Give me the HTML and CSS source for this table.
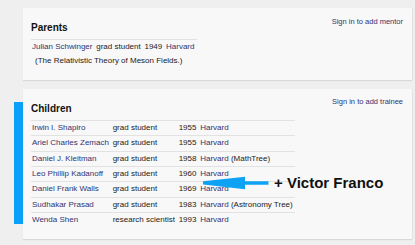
FILE: index.html
```html
<!DOCTYPE html>
<html>
<head>
<meta charset="utf-8">
<link rel="stylesheet" href="styles.css">
</head>
<body>
<div class="page">
  <section class="card">
    <div class="card-head">
      <h2 class="title">Parents</h2>
      <a class="signin">Sign in to add mentor</a>
    </div>
    <table class="people parents">
      <tr><td><a>Julian Schwinger</a></td><td>grad student</td><td>1949</td><td><a>Harvard</a></td></tr>
      <tr><td colspan="4" class="thesis">(The Relativistic Theory of Meson Fields.)</td></tr>
    </table>
  </section>
  <section class="card">
    <div class="card-head">
      <h2 class="title">Children</h2>
      <a class="signin">Sign in to add trainee</a>
    </div>
    <table class="people children">
      <tr><td><a>Irwin I. Shapiro</a></td><td>grad student</td><td>1955</td><td><a>Harvard</a></td></tr>
      <tr><td><a>Ariel Charles Zemach</a></td><td>grad student</td><td>1955</td><td><a>Harvard</a></td></tr>
      <tr><td><a>Daniel J. Kleitman</a></td><td>grad student</td><td>1958</td><td><a>Harvard</a> (MathTree)</td></tr>
      <tr><td><a>Leo Phillip Kadanoff</a></td><td>grad student</td><td>1960</td><td><a>Harvard</a></td></tr>
      <tr><td><a>Daniel Frank Walls</a></td><td>grad student</td><td>1969</td><td><a>Harvard</a></td></tr>
      <tr><td><a>Sudhakar Prasad</a></td><td>grad student</td><td>1983</td><td><a>Harvard</a> (Astronomy Tree)</td></tr>
      <tr><td><a>Wenda Shen</a></td><td>research scientist</td><td>1993</td><td><a>Harvard</a></td></tr>
    </table>
  </section>
</div>
<div class="marker"></div>
<svg class="arrow" width="415" height="245" viewBox="0 0 415 245">
  <polygon points="203,181.2 245,176.8 245,181.3 268.5,181.3 268.5,184.7 245,184.7 245,189.3 203,184.4" fill="#0ea2f4"/>
</svg>
<div class="note">+ Victor Franco</div>
</body>
</html>
```
FILE: styles.css
```css
html, body {
  margin: 0;
  padding: 0;
}
body {
  position: relative;
  width: 415px;
  height: 245px;
  overflow: hidden;
  background: #efefef;
  font-family: "Liberation Sans", Arial, sans-serif;
  color: #222;
}
.page {
  display: flex;
  flex-direction: column;
  gap: 9px;
  padding: 8px 3px 0 23px;
}
.card {
  background: #f8f8f8;
  box-shadow: 0 1px 1px rgba(0, 0, 0, 0.09), 1px 0 1px rgba(0, 0, 0, 0.04);
  padding: 0 9px 11px 8px;
}
.card-head {
  display: flex;
  justify-content: space-between;
  align-items: flex-start;
}
.title {
  margin: 14px 0 5px 0;
  font-size: 10px;
  line-height: 12px;
  font-weight: bold;
  color: #111;
}
.signin {
  margin-top: 8.5px;
  font-size: 7.5px;
  line-height: 10px;
  color: #33336e;
}
a {
  color: #33336e;
  text-decoration: none;
}
.people {
  border-collapse: collapse;
  border-top: 1px solid #e2e2e2;
  font-size: 8px;
  line-height: 14.4px;
}
.people td {
  padding: 0 2.75px 0 1px;
  white-space: nowrap;
}
.children tr {
  border-bottom: 1px solid #e2e2e2;
}
.children tr:last-child {
  border-bottom: none;
}
.thesis {
  padding-left: 4px !important;
}
.marker {
  position: absolute;
  left: 14px;
  top: 101.7px;
  width: 8.5px;
  height: 122.3px;
  background: #08a0f8;
}
.arrow {
  position: absolute;
  left: 0;
  top: 0;
}
.note {
  position: absolute;
  left: 274px;
  top: 174.6px;
  font-size: 15px;
  line-height: 15px;
  font-weight: bold;
  color: #111;
  white-space: nowrap;
}
```
